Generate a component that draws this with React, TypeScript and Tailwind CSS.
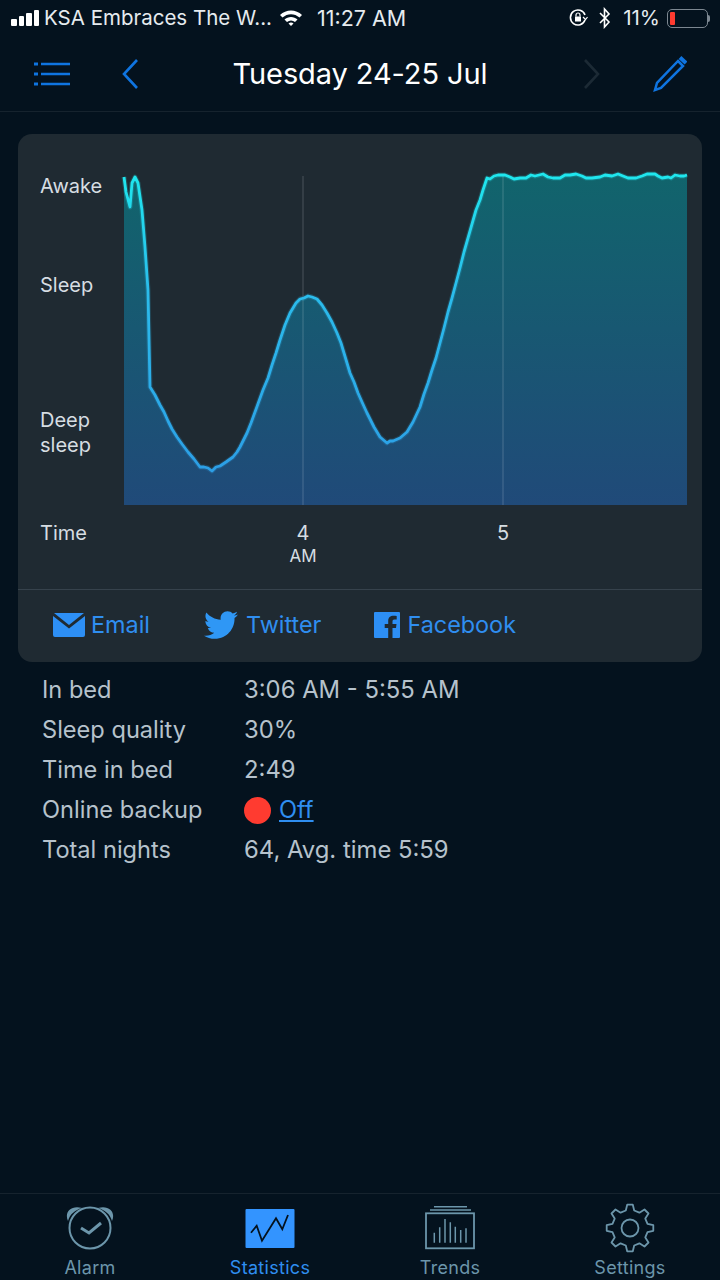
import { FaTwitter } from "react-icons/fa";

const font = { fontFamily: "Inter, 'Liberation Sans', sans-serif" };

const linePoints =
  "124,177 126,192 130,207 132,183 135,177 138,183 142,210 145,247 148,290 150,387 155,395 160,405 164,412 168,421 172,429 177,437 182,444 188,452 194,459 200,467 204,467 208,468 212,471 216,467 220,466 226,462 233,457 237,452 240,447 247,433 251,423 255,412 259,401 263,390 268,378 272,365 276,353 280,340 285,325 290,313 296,303 300,299 304,298 308,296 312,297 317,299 322,305 327,313 332,322 337,333 341,343 344,353 350,373 354,382 358,393 362,402 367,413 371,421 374,427 380,437 387,443 390,441 393,441 400,438 407,432 413,422 420,407 424,394 428,383 432,370 436,358 440,343 444,328 448,312 452,298 456,283 460,268 464,252 468,238 472,224 476,210 480,200 483,190 487,178 490,179 494,176 498,175 505,175 510,177 514,179 520,178 526,178 531,175 535,176 543,174 548,177 553,178 560,178 565,175 570,175 576,174 582,176 586,178 592,178 600,177 605,175 612,176 618,174 623,176 628,178 636,178 642,176 647,174 655,174 658,176 662,178 668,177 671,178 675,175 680,176 684,176 687,175";

const gearPath = (() => {
  const teeth = 8;
  const cx = 30;
  const cy = 30;
  const parts: string[] = [];
  for (let i = 0; i < teeth; i++) {
    const a = (i * Math.PI * 2) / teeth - Math.PI / 2;
    const step = (Math.PI * 2) / teeth;
    const pts: [number, number][] = [
      [18, a - step * 0.3],
      [23.5, a - step * 0.15],
      [23.5, a + step * 0.15],
      [18, a + step * 0.3],
    ];
    pts.forEach(([r, t]) => {
      const x = (cx + r * Math.cos(t)).toFixed(1);
      const y = (cy + r * Math.sin(t)).toFixed(1);
      parts.push(`${parts.length ? "L" : "M"}${x} ${y}`);
    });
  }
  return parts.join(" ") + "Z";
})();

function StatusBar() {
  return (
    <div className="h-[36px] flex items-center pl-[11px] pr-[12px] text-[#e6ebef] text-[20.5px]">
      <div className="flex items-end gap-[2px] h-[16px] mr-[5px]">
        <span className="w-[5.5px] h-[7px] rounded-[1px] bg-white" />
        <span className="w-[5.5px] h-[10px] rounded-[1px] bg-white" />
        <span className="w-[5.5px] h-[13px] rounded-[1px] bg-white" />
        <span className="w-[5.5px] h-[16px] rounded-[1px] bg-white" />
      </div>
      <span className="whitespace-nowrap w-[235px]">KSA Embraces The W...</span>
      <svg width="24" height="18" viewBox="0 0 24 18">
        <path d="M1 6 C7 0 17 0 23 6 L20.5 8.6 C15.5 4 8.500 4 3.500 8.600Z" fill="#fff" />
        <path d="M5.500 10.500 C9 7 15 7 18.500 10.500 L16 13 C13.500 11 10.500 11 8 13Z" fill="#fff" />
        <path d="M9.500 14.500 C11 13 13 13 14.500 14.500 L12 17Z" fill="#fff" />
      </svg>
      <span className="ml-[14px] whitespace-nowrap text-[21.5px]">11:27 AM</span>
      <div className="flex-1" />
      <svg width="20" height="20" viewBox="0 0 20 20" fill="none" stroke="#fff" strokeWidth="1.6" className="mr-[11px]">
        <path d="M17 12 A7.500 7.500 0 1 1 17 7" />
        <path d="M15 9 L17.500 11.500 L19.500 9" strokeWidth="1.200" />
        <rect x="7" y="8.500" width="6" height="5" fill="#fff" stroke="none" />
        <path d="M8 8.500 V7 a2 2 0 0 1 4 0 V8.500" strokeWidth="1.200" />
      </svg>
      <svg width="12" height="22" viewBox="0 0 12 22" fill="none" stroke="#fff" strokeWidth="1.600" className="mr-[12px]">
        <path d="M1 6 L10 15 L5.500 20 V2 L10 7 L1 16" />
      </svg>
      <span className="whitespace-nowrap mr-[7px]">11%</span>
      <div className="relative w-[41px] h-[19px] rounded-[5px] border border-[#7c8791] p-[2px]">
        <div className="w-[5px] h-full rounded-[1px] bg-[#ff3b30]" />
        <span className="absolute -right-[3px] top-[5px] w-[2px] h-[7px] rounded-r-sm bg-[#7c8791]" />
      </div>
    </div>
  );
}

function NavBar() {
  return (
    <div className="h-[76px] flex items-center border-b border-[#16232e] pl-[34px] pr-[33px]">
      <svg width="37" height="24" viewBox="0 0 37 24" stroke="#0f74e0" strokeWidth="2.500">
        <path d="M7 2 H36 M7 12 H36 M7 22 H36" />
        <path d="M0 2 H4 M0 12 H4 M0 22 H4" strokeWidth="3" />
      </svg>
      <svg width="18" height="32" viewBox="0 0 18 32" fill="none" stroke="#0f74e0" strokeWidth="2.600" className="ml-[50px]">
        <path d="M16 2 L3 16 L16 30" />
      </svg>
      <h1 className="flex-1 text-center text-white text-[29px] leading-none whitespace-nowrap -tracking-[0.1px] -translate-x-[1px]">
        Tuesday 24-25 Jul
      </h1>
      <svg width="18" height="32" viewBox="0 0 18 32" fill="none" stroke="#1c2a35" strokeWidth="2.600" className="mr-[52px]">
        <path d="M2 2 L15 16 L2 30" />
      </svg>
      <svg width="34" height="36" viewBox="0 0 34 36" fill="none" stroke="#0f74e0" strokeWidth="2.500">
        <path d="M25 5 L30 10 L8 32 L2 34 L4 27Z" />
        <path d="M27 1.500 L33 7" strokeWidth="4" />
      </svg>
    </div>
  );
}

function SleepChart() {
  return (
    <svg width="563" height="332" viewBox="124 175 563 332" className="block overflow-visible">
      <defs>
        <linearGradient id="area" gradientUnits="userSpaceOnUse" x1="0" y1="176" x2="0" y2="505">
          <stop offset="0" stopColor="#11646c" />
          <stop offset="1" stopColor="#204a79" />
        </linearGradient>
        <linearGradient id="line" gradientUnits="userSpaceOnUse" x1="0" y1="176" x2="0" y2="470">
          <stop offset="0" stopColor="#1fe6ee" />
          <stop offset="0.4" stopColor="#2bbcec" />
          <stop offset="1" stopColor="#2c9fe6" />
        </linearGradient>
      </defs>
      <polygon points={`124,505 ${linePoints} 687,505`} fill="url(#area)" />
      <path d="M303 176 V505 M503 176 V505" stroke="#ffffff" strokeOpacity="0.2" strokeWidth="1" fill="none" />
      <polyline points={linePoints} fill="none" stroke="url(#line)" strokeOpacity="0.2" strokeWidth="5" strokeLinejoin="round" />
      <polyline points={linePoints} fill="none" stroke="url(#line)" strokeWidth="2.800" strokeLinejoin="round" />
    </svg>
  );
}

function Card() {
  return (
    <div className="mx-[18px] mt-[22px] h-[528px] rounded-[14px] bg-[#1f2a32] flex flex-col">
      <div className="flex-1 relative pl-[22px] text-[20px] text-[#d6dde2]">
        <div className="flex pt-[41px]">
          <div className="w-[84px] leading-[25px]">
            <div className="-mt-[1px]">Awake</div>
            <div className="mt-[74px]">Sleep</div>
            <div className="mt-[110px]">Deep<br />sleep</div>
          </div>
          <SleepChart />
        </div>
        <div className="flex mt-[14px] leading-[25px]">
          <div className="w-[84px]">Time</div>
          <div className="relative flex-1">
            <div className="absolute left-[159px] w-[40px] text-center">
              4
              <div className="text-[17px] leading-[20px]">AM</div>
            </div>
            <div className="absolute left-[359px] w-[40px] text-center">5</div>
          </div>
        </div>
      </div>
      <div className="h-[73px] border-t border-[#36424c] flex items-center text-[#2f8ef0] text-[23.4px] pl-[35px] pb-[2px]">
        <svg width="32" height="24" viewBox="0 0 32 24" className="mr-[6px]">
          <path d="M1 0 H31 L16 12Z" fill="#2d8ff5" />
          <path d="M0 3 L16 15.500 L32 3 V22 a2 2 0 0 1 -2 2 H2 a2 2 0 0 1 -2 -2Z" fill="#2d8ff5" />
        </svg>
        <span>Email</span>
        <FaTwitter className="ml-[54px] mr-[8px] text-[#2f97f5]" size={34} />
        <span>Twitter</span>
        <svg width="26" height="26" viewBox="0 0 26 26" className="ml-[53px] mr-[7px]">
          <path fillRule="evenodd" fill="#2d8ff5" d="M1 0 H25 a1 1 0 0 1 1 1 V25 a1 1 0 0 1 -1 1 H18.500 V16 H22 L22.500 12 H18.500 V9.500 C18.500 8.300 19 7.500 20.500 7.500 H22.700 V4 C21.500 3.900 20.500 3.800 19.500 3.800 C16.300 3.800 14.200 5.700 14.200 9 V12 H10.700 V16 H14.200 V26 H1 a1 1 0 0 1 -1 -1 V1 a1 1 0 0 1 1 -1Z" />
        </svg>
        <span>Facebook</span>
      </div>
    </div>
  );
}

const rows: [string, string][] = [
  ["In bed", "3:06 AM - 5:55 AM"],
  ["Sleep quality", "30%"],
  ["Time in bed", "2:49"],
  ["Online backup", ""],
  ["Total nights", "64, Avg. time 5:59"],
];

function Details() {
  return (
    <div className="pl-[42px] pt-[8px] text-[23.6px] leading-[40px] text-[#b6c2cc]">
      {rows.map(([label, value]) => (
        <div key={label} className="flex">
          <div className="w-[202px]">{label}</div>
          {label === "Online backup" ? (
            <div className="flex items-center">
              <span className="w-[27px] h-[27px] rounded-full bg-[#ff3b30] mr-[8px]" />
              <span className="text-[#2f8ef0] underline">Off</span>
            </div>
          ) : (
            <div className="text-[23.85px]">{value}</div>
          )}
        </div>
      ))}
    </div>
  );
}

function TabBar() {
  const stroke = "#6c96ab";
  return (
    <div className="h-[87px] border-t border-[#16232e] grid grid-cols-4 text-[18px] tracking-[0.3px] text-[#6c96ab]">
      <div className="flex flex-col items-center">
        <svg width="50" height="50" viewBox="0 0 50 50" fill="none" className="mt-[10px]">
          <circle cx="25" cy="24" r="20.500" stroke={stroke} strokeWidth="2" />
          <path d="M16 24 L24 29 L36 19" stroke={stroke} strokeWidth="3" />
          <path d="M3 17 C-1 8 6 1 17 4 C10 6 5 10 3 17Z M47 17 C51 8 44 1 33 4 C40 6 45 10 47 17Z" fill={stroke} />
        </svg>
        <span className="leading-[20px] mt-[4px]">Alarm</span>
      </div>
      <div className="flex flex-col items-center text-[#2f8ef0]">
        <svg width="50" height="50" viewBox="0 0 50 50" fill="none" className="mt-[10px]">
          <rect x="0.500" y="5" width="49" height="39" fill="#3394ff" rx="1" />
          <path d="M6 28.700 L11.700 21.700 L17 36.700 L31 14.300 L37.300 25.300 L43 11" stroke="#04121e" strokeWidth="1.800" />
        </svg>
        <span className="leading-[20px] mt-[4px]">Statistics</span>
      </div>
      <div className="flex flex-col items-center">
        <svg width="50" height="50" viewBox="0 0 50 50" fill="none" className="mt-[10px]" stroke={stroke}>
          <path d="M9 2.700 H42 M5 6 H46" strokeWidth="1.500" />
          <rect x="1" y="9.300" width="48" height="35" strokeWidth="1.800" />
          <path d="M9.300 38.700 V28.700 M14.700 38.700 V23.300 M20 38.700 V15 M25.300 38.700 V18.300 M30.300 38.700 V22.700 M35.700 38.700 V26 M41 38.700 V24.300" strokeWidth="1.500" />
        </svg>
        <span className="leading-[20px] mt-[4px]">Trends</span>
      </div>
      <div className="flex flex-col items-center">
        <svg width="50" height="50" viewBox="5 5 50 50" fill="none" className="mt-[9px] mb-[1px] overflow-visible" stroke={stroke} strokeWidth="1.800">
          <path d={gearPath} strokeLinejoin="round" />
          <circle cx="30" cy="30" r="8.500" />
        </svg>
        <span className="leading-[20px] mt-[4px]">Settings</span>
      </div>
    </div>
  );
}

export default function App() {
  return (
    <div className="w-[720px] h-[1280px] bg-[#04121e] flex flex-col overflow-hidden" style={font}>
      <StatusBar />
      <NavBar />
      <Card />
      <Details />
      <div className="flex-1" />
      <TabBar />
    </div>
  );
}
